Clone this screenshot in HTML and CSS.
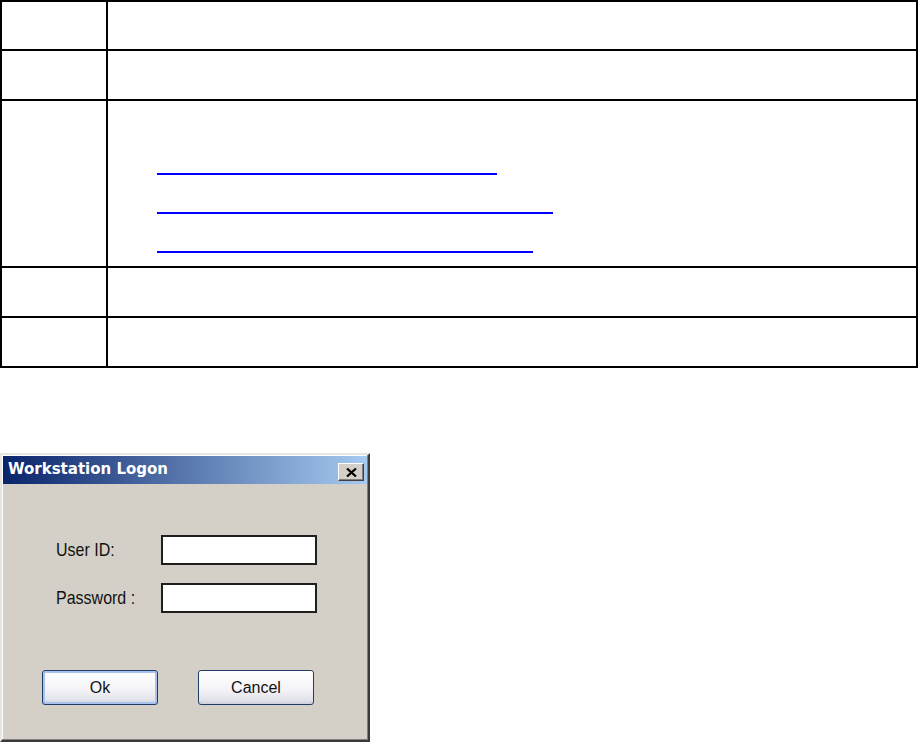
FILE: index.html
```html
<!DOCTYPE html>
<html lang="en">
<head>
<meta charset="UTF-8">
<title>Workstation Logon</title>
<link rel="stylesheet" href="styles.css">
</head>
<body>

<div class="spec">
<div class="cell key"></div><div class="cell"></div>
<div class="cell key"></div><div class="cell"></div>
<div class="cell key"></div>
<div class="cell links">
<a class="link l1" href="#"></a>
<a class="link l2" href="#"></a>
<a class="link l3" href="#"></a>
</div>
<div class="cell key"></div><div class="cell"></div>
<div class="cell key"></div><div class="cell"></div>
</div>

<div class="dialog">
<div class="titlebar">
<span class="title">Workstation Logon</span>
<span class="close">
<svg width="11" height="9" viewBox="0 0 11 9"><path d="M1 0.5L10 8.5M10 0.5L1 8.5" stroke="#000" stroke-width="2.2"/></svg>
</span>
</div>
<div class="form">
<label for="uid">User ID:</label>
<input id="uid">
<label for="pwd">Password :</label>
<input id="pwd" type="password">
</div>
<div class="buttons">
<button class="btn default">Ok</button>
<button class="btn">Cancel</button>
</div>
</div>

</body>
</html>
```

FILE: styles.css
```css
body{margin:0;background:#fff;font-family:"Liberation Sans",Arial,sans-serif}
.spec{display:grid;grid-template-columns:106px 1fr;grid-template-rows:49px 50px 167px 50px 50px;width:918px;box-sizing:border-box;border-top:2px solid #000;border-left:2px solid #000}
.cell{border-right:2px solid #000;border-bottom:2px solid #000}
.links{padding:35px 0 0 49px}
.link{display:block;height:37px;border-bottom:2px solid #00f}
.l1{width:340px}
.l2{width:396px}
.l3{width:376px}

.dialog{margin-top:85px;width:370px;height:289px;box-sizing:border-box;background:#d4d0c8;border:2px solid;border-color:#e8e6e0 #3a3a3a #3a3a3a #e8e6e0;box-shadow:inset -1px -1px #808080,inset 1px 1px #fff;padding:1px;display:flex;flex-direction:column}
.titlebar{height:28px;display:flex;align-items:flex-end;justify-content:space-between;padding:0 3px 3px 5px;box-sizing:border-box;background:linear-gradient(to right,#0a246a,#a6caf0)}
.title{color:#fff;font-family:"DejaVu Sans",Verdana,sans-serif;font-weight:bold;font-size:15px;align-self:center;padding-top:1px}
.close{width:26px;height:18px;box-sizing:border-box;background:#d4d0c8;border:1px solid;border-color:#fff #404040 #404040 #fff;box-shadow:inset -1px -1px #808080;display:flex;align-items:center;justify-content:center}
.close svg{display:block}

.form{display:grid;grid-template-columns:105px 156px;row-gap:18px;align-items:center;padding:51px 0 0 53px;font-size:16px;color:#111}
.form label{display:inline-block;transform:scaleY(1.12)}
.form input{height:30px;box-sizing:border-box;border:2px solid #1e1e1e;background:#fff;margin:0;padding:0 4px}
.buttons{display:flex;gap:40px;padding:57px 0 0 39px}
.btn{width:116px;height:35px;border:1px solid #203c66;border-radius:3px;background:linear-gradient(#ffffff,#f4f4f8 55%,#e2e2ea 88%,#cfcfdc);font-family:"Liberation Sans",Arial,sans-serif;font-size:16px;color:#111;padding:0}
.btn.default{box-shadow:inset 0 0 0 2px #a8c2ee}
```
